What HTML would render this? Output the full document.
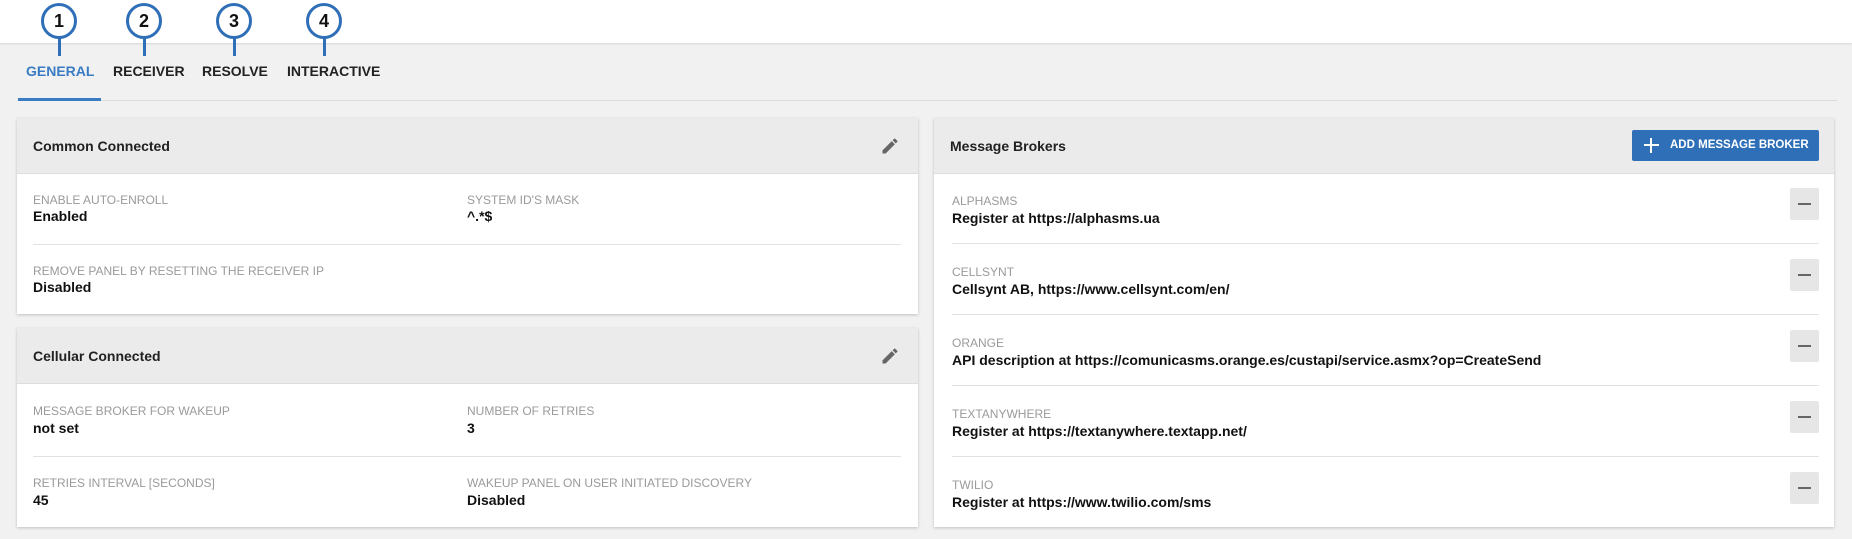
<!DOCTYPE html>
<html><head><style>
*{box-sizing:border-box;margin:0;padding:0}
body{width:1852px;height:539px;background:#f1f1f1;font-family:"Liberation Sans",sans-serif;position:relative;overflow:hidden;color:#212121}
.top{position:absolute;left:0;top:0;width:1852px;height:43px;background:#fff;box-shadow:0 1px 2px rgba(0,0,0,.12)}
.c{position:absolute;top:3px;width:36px;height:36px;border:3px solid #2f6fb7;border-radius:50%;background:#fff;text-align:center;line-height:30px;font-weight:bold;font-size:18px;color:#111;z-index:2}
.ln{position:absolute;top:38px;width:3px;height:18px;background:#2f6fb7;z-index:2}
.tab{position:absolute;top:63px;font-size:14px;font-weight:bold;color:#222}
.panel{position:absolute;background:#fff;box-shadow:0 1px 3px rgba(0,0,0,.2)}
.hd{position:absolute;left:0;top:0;right:0;background:#ebebeb;border-bottom:1px solid #ddd;font-size:14px;font-weight:bold;padding-left:16px}
.lb{position:absolute;font-size:12px;color:#9a9a9a}
.v{position:absolute;font-size:14px;font-weight:bold;color:#111}
.sep{position:absolute;height:1px;background:#e2e2e2}
.mb{position:absolute;left:856px;width:29px;height:32px;background:#e6e6e6;border-radius:2px}
.mb:after{content:"";position:absolute;left:8px;top:15px;width:13px;height:2px;background:#666}
</style></head><body>
<div class="top"></div>
<div class="c" style="left:41px">1</div><div class="ln" style="left:58px"></div>
<div class="c" style="left:126px">2</div><div class="ln" style="left:143px"></div>
<div class="c" style="left:216px">3</div><div class="ln" style="left:233px"></div>
<div class="c" style="left:306px">4</div><div class="ln" style="left:323px"></div>
<div class="tab" style="left:26px;color:#3a7cc3">GENERAL</div>
<div class="tab" style="left:113px">RECEIVER</div>
<div class="tab" style="left:202px">RESOLVE</div>
<div class="tab" style="left:287px">INTERACTIVE</div>
<div style="position:absolute;left:17px;top:100px;width:1820px;height:1px;background:#ddd"></div>
<div style="position:absolute;left:18px;top:98px;width:83px;height:3px;background:#3a7cc3"></div>

<div class="panel" style="left:17px;top:118px;width:901px;height:196px">
<div class="hd" style="height:56px;line-height:56px">Common Connected
<svg style="position:absolute;right:18px;top:18px" width="20" height="20" viewBox="0 0 24 24"><path fill="#666" d="M3 17.25V21h3.75L17.81 9.94l-3.75-3.75L3 17.25zM20.71 7.04a1 1 0 0 0 0-1.41l-2.34-2.34a1 1 0 0 0-1.41 0l-1.83 1.83 3.75 3.75 1.83-1.83z"/></svg></div>
<div class="lb" style="left:16px;top:75px">ENABLE AUTO-ENROLL</div><div class="v" style="left:16px;top:90px">Enabled</div>
<div class="lb" style="left:450px;top:75px">SYSTEM ID'S MASK</div><div class="v" style="left:450px;top:90px">^.*$</div>
<div class="sep" style="left:16px;right:17px;top:126px"></div>
<div class="lb" style="left:16px;top:146px">REMOVE PANEL BY RESETTING THE RECEIVER IP</div><div class="v" style="left:16px;top:161px">Disabled</div>
</div>

<div class="panel" style="left:17px;top:328px;width:901px;height:199px">
<div class="hd" style="height:56px;line-height:56px">Cellular Connected
<svg style="position:absolute;right:18px;top:18px" width="20" height="20" viewBox="0 0 24 24"><path fill="#666" d="M3 17.25V21h3.75L17.81 9.94l-3.75-3.75L3 17.25zM20.71 7.04a1 1 0 0 0 0-1.41l-2.34-2.34a1 1 0 0 0-1.41 0l-1.83 1.83 3.75 3.75 1.83-1.83z"/></svg></div>
<div class="lb" style="left:16px;top:76px">MESSAGE BROKER FOR WAKEUP</div><div class="v" style="left:16px;top:92px">not set</div>
<div class="lb" style="left:450px;top:76px">NUMBER OF RETRIES</div><div class="v" style="left:450px;top:92px">3</div>
<div class="sep" style="left:16px;right:17px;top:128px"></div>
<div class="lb" style="left:16px;top:148px">RETRIES INTERVAL [SECONDS]</div><div class="v" style="left:16px;top:164px">45</div>
<div class="lb" style="left:450px;top:148px">WAKEUP PANEL ON USER INITIATED DISCOVERY</div><div class="v" style="left:450px;top:164px">Disabled</div>
</div>

<div class="panel" style="left:934px;top:118px;width:900px;height:409px">
<div class="hd" style="height:56px;line-height:56px">Message Brokers
<div style="position:absolute;left:698px;top:12px;width:187px;height:31px;background:#2f6fb7;border-radius:2px;color:#fff;font-size:11.5px;line-height:31px;padding-left:38px">ADD MESSAGE BROKER
<span style="position:absolute;left:12px;top:8px;width:15px;height:15px"><span style="position:absolute;left:6px;top:0;width:2px;height:15px;background:#fff"></span><span style="position:absolute;left:0;top:6px;width:15px;height:2px;background:#fff"></span></span></div></div>
<div class="lb" style="left:18px;top:76px">ALPHASMS</div><div class="v" style="left:18px;top:92px">Register at https://alphasms.ua</div><div class="mb" style="top:70px"></div>
<div class="sep" style="left:18px;right:15px;top:125px"></div>
<div class="lb" style="left:18px;top:147px">CELLSYNT</div><div class="v" style="left:18px;top:163px">Cellsynt AB, https://www.cellsynt.com/en/</div><div class="mb" style="top:141px"></div>
<div class="sep" style="left:18px;right:15px;top:196px"></div>
<div class="lb" style="left:18px;top:218px">ORANGE</div><div class="v" style="left:18px;top:234px">API description at https://comunicasms.orange.es/custapi/service.asmx?op=CreateSend</div><div class="mb" style="top:212px"></div>
<div class="sep" style="left:18px;right:15px;top:267px"></div>
<div class="lb" style="left:18px;top:289px">TEXTANYWHERE</div><div class="v" style="left:18px;top:305px">Register at https://textanywhere.textapp.net/</div><div class="mb" style="top:283px"></div>
<div class="sep" style="left:18px;right:15px;top:338px"></div>
<div class="lb" style="left:18px;top:360px">TWILIO</div><div class="v" style="left:18px;top:376px">Register at https://www.twilio.com/sms</div><div class="mb" style="top:354px"></div>
</div>
</body></html>
